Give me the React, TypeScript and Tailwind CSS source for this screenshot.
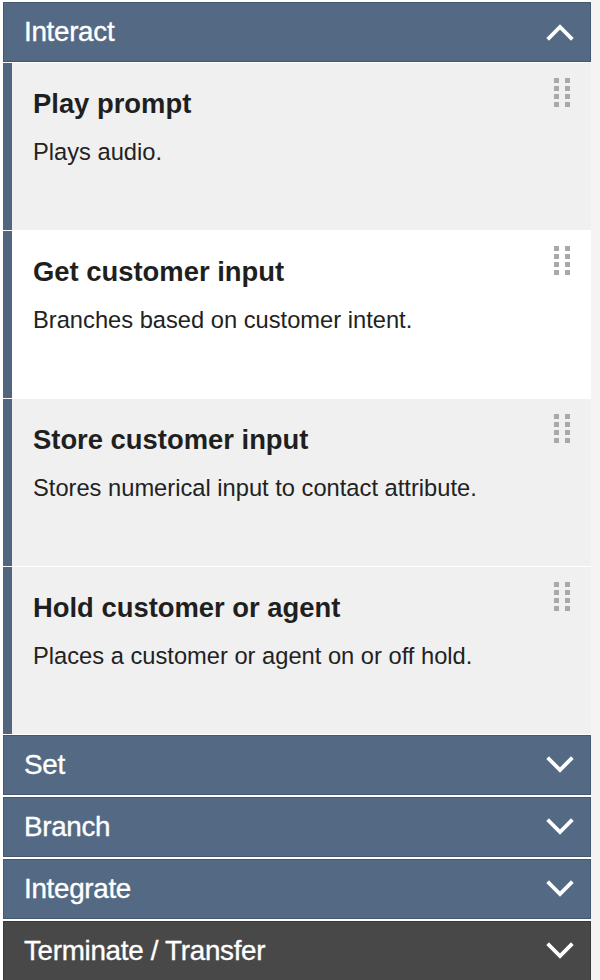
import React from "react";

const font = { fontFamily: '"Liberation Sans", Arial, Helvetica, sans-serif' };

function Chevron({ up }: { up?: boolean }) {
  return (
    <svg width="28" height="18" viewBox="0 0 28 18" className="shrink-0">
      <polyline
        points={up ? "3,15 14,4 25,15" : "3,3 14,14 25,3"}
        fill="none"
        stroke="white"
        strokeWidth="3.8"
        strokeLinecap="square"
        strokeLinejoin="miter"
      />
    </svg>
  );
}

function Handle() {
  return (
    <div className="grid grid-cols-2 gap-x-[6px] gap-y-[3px]">
      {Array.from({ length: 8 }).map((_, i) => (
        <div key={i} className="w-[5px] h-[5px] bg-[#a9a9a9]" />
      ))}
    </div>
  );
}

function Header({ label, up, dark }: { label: string; up?: boolean; dark?: boolean }) {
  return (
    <div
      className={
        "h-[60px] shrink-0 flex items-center justify-between pl-[20px] pr-[16px] border " +
        (dark ? "bg-[#484848] border-[#3a3a3a]" : "bg-[#546a84] border-[#44586f]")
      }
    >
      <span className="text-white text-[27.8px] leading-none tracking-[-0.3px] [-webkit-text-stroke:0.35px_white]">
        {label}
      </span>
      <Chevron up={up} />
    </div>
  );
}

function Item({ title, desc, white }: { title: string; desc: string; white?: boolean }) {
  return (
    <div
      className={
        "h-[167px] shrink-0 flex border-l-[9px] border-[#51667e] " +
        (white ? "bg-white" : "bg-[#f0f0f0]")
      }
    >
      <div className="flex-1 pl-[21px] pt-[25px]">
        <div className="text-[27.4px] leading-[32px] font-bold text-[#1f1f1f]">{title}</div>
        <div className="mt-[18px] text-[23.7px] leading-[28px] text-[#222]">{desc}</div>
      </div>
      <div className="pt-[15px] pr-[21px]">
        <Handle />
      </div>
    </div>
  );
}

export default function App() {
  return (
    <div className="w-[600px] h-[980px] overflow-hidden flex bg-white" style={font}>
      <div className="w-[591px] pl-[3px] pt-[2px] flex flex-col">
        <Header label="Interact" up />
        <div className="flex flex-col gap-[1px] mt-[1px]">
          <Item title="Play prompt" desc="Plays audio." />
          <Item title="Get customer input" desc="Branches based on customer intent." white />
          <Item title="Store customer input" desc="Stores numerical input to contact attribute." />
          <Item title="Hold customer or agent" desc="Places a customer or agent on or off hold." />
        </div>
        <div className="flex flex-col gap-[2px] mt-[1px]">
          <Header label="Set" />
          <Header label="Branch" />
          <Header label="Integrate" />
          <Header label="Terminate / Transfer" dark />
        </div>
      </div>
      <div className="flex-1 bg-[#f4f4f4]" />
    </div>
  );
}
